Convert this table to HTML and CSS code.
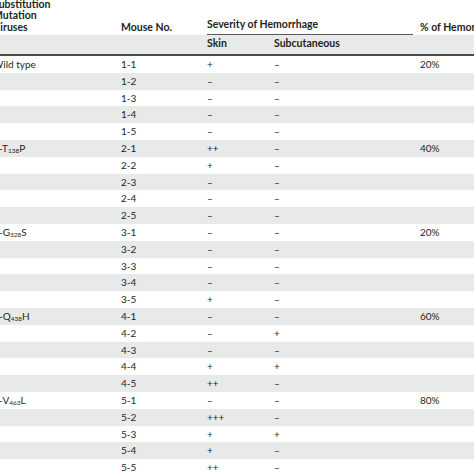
FILE: index.html
```html
<!DOCTYPE html>
<html>
<head>
<meta charset="utf-8">
<link rel="stylesheet" href="styles.css">
</head>
<body>
<table class="tbl">
  <colgroup>
    <col class="c1"><col class="c2"><col class="c3"><col class="c4"><col class="c5">
  </colgroup>
  <thead>
    <tr class="h1">
      <th>Substitution<br>Mutation<br>Viruses</th>
      <th>Mouse No.</th>
      <th colspan="2" class="span"><div class="spanin">Severity of Hemorrhage</div></th>
      <th>% of Hemorrhage</th>
    </tr>
    <tr class="h2">
      <th></th>
      <th></th>
      <th>Skin</th>
      <th>Subcutaneous</th>
      <th></th>
    </tr>
  </thead>
  <tbody>
    <tr><td>Wild type</td><td>1-1</td><td>+</td><td>–</td><td>20%</td></tr>
    <tr><td></td><td>1-2</td><td>–</td><td>–</td><td></td></tr>
    <tr><td></td><td>1-3</td><td>–</td><td>–</td><td></td></tr>
    <tr><td></td><td>1-4</td><td>–</td><td>–</td><td></td></tr>
    <tr><td></td><td>1-5</td><td>–</td><td>–</td><td></td></tr>
    <tr><td><span class="mut">-T<sub>138</sub>P</span></td><td>2-1</td><td>++</td><td>–</td><td>40%</td></tr>
    <tr><td></td><td>2-2</td><td>+</td><td>–</td><td></td></tr>
    <tr><td></td><td>2-3</td><td>–</td><td>–</td><td></td></tr>
    <tr><td></td><td>2-4</td><td>–</td><td>–</td><td></td></tr>
    <tr><td></td><td>2-5</td><td>–</td><td>–</td><td></td></tr>
    <tr><td><span class="mut">-G<sub>328</sub>S</span></td><td>3-1</td><td>–</td><td>–</td><td>20%</td></tr>
    <tr><td></td><td>3-2</td><td>–</td><td>–</td><td></td></tr>
    <tr><td></td><td>3-3</td><td>–</td><td>–</td><td></td></tr>
    <tr><td></td><td>3-4</td><td>–</td><td>–</td><td></td></tr>
    <tr><td></td><td>3-5</td><td>+</td><td>–</td><td></td></tr>
    <tr><td><span class="mut">-Q<sub>438</sub>H</span></td><td>4-1</td><td>–</td><td>–</td><td>60%</td></tr>
    <tr><td></td><td>4-2</td><td>–</td><td>+</td><td></td></tr>
    <tr><td></td><td>4-3</td><td>–</td><td>–</td><td></td></tr>
    <tr><td></td><td>4-4</td><td>+</td><td>+</td><td></td></tr>
    <tr><td></td><td>4-5</td><td>++</td><td>–</td><td></td></tr>
    <tr><td><span class="mut">-V<sub>463</sub>L</span></td><td>5-1</td><td>–</td><td>–</td><td>80%</td></tr>
    <tr><td></td><td>5-2</td><td>+++</td><td>–</td><td></td></tr>
    <tr><td></td><td>5-3</td><td>+</td><td>+</td><td></td></tr>
    <tr><td></td><td>5-4</td><td>+</td><td>–</td><td></td></tr>
    <tr><td></td><td>5-5</td><td>++</td><td>–</td><td></td></tr>
  </tbody>
</table>
</body>
</html>
```

FILE: styles.css
```css
html, body {
  margin: 0;
  padding: 0;
  background: #ffffff;
  overflow: hidden;
}
body {
  width: 474px;
  height: 474px;
  font-family: Lato, "Open Sans", "Liberation Sans", sans-serif;
  color: #231f20;
}
.tbl {
  border-collapse: separate;
  border-spacing: 0;
  table-layout: fixed;
  width: 577px;
  margin-left: -7px;
  margin-top: -1.5px;
}
.c1 { width: 128px; }
.c2 { width: 86px; }
.c3 { width: 67px; }
.c4 { width: 146px; }
.c5 { width: 150px; }
th, td {
  padding: 0;
  text-align: left;
  white-space: nowrap;
  overflow: hidden;
}
th {
  font-weight: 700;
  font-size: 10.5px;
  line-height: 11.5px;
}
.h1 th {
  vertical-align: bottom;
  padding-bottom: 2px;
}
.h1 th.span {
  padding-bottom: 0;
}
.spanin {
  margin-right: 7px;
  padding-bottom: 4px;
  border-bottom: 1px solid #5a5a5a;
}
.h2 th {
  background: #e8e9e9;
  line-height: 17px;
  height: 17px;
  padding-bottom: 2px;
  border-bottom: 2px solid #4a4a4a;
}
td {
  font-size: 10px;
  height: 16.8px;
  line-height: 16.8px;
  vertical-align: middle;
}
tbody tr:nth-child(even) td {
  background: #e8e9e9;
}
.mut {
  display: inline-block;
  padding-left: 6px;
}
sub {
  font-size: 6.5px;
  line-height: 0;
  vertical-align: -1px;
}
```
